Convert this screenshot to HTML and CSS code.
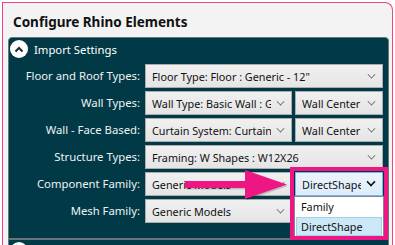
FILE: index.html
```html
<!DOCTYPE html>
<html lang="en">
<head>
    <meta charset="UTF-8">
    <title>Configure Rhino Elements</title>
    <link rel="stylesheet" href="styles.css">
</head>
<body>
<div class="window">
    <h1 class="title">Configure Rhino Elements</h1>

    <section class="expander">
        <div class="expander-head">
            <span class="toggle">
                <svg width="10" height="7" viewBox="0 0 10 7"><path d="M1.5 5.5 L5 2 L8.5 5.5" fill="none" stroke="#1b2b30" stroke-width="2"/></svg>
            </span>
            Import Settings
        </div>
        <div class="fields">
            <label>Floor and Roof Types:</label>
            <div class="combos">
                <div class="combo"><span class="combo-text">Floor Type: Floor : Generic - 12"</span><i class="chev"></i></div>
            </div>

            <label>Wall Types:</label>
            <div class="combos">
                <div class="combo wide"><span class="combo-text">Wall Type: Basic Wall : Generic - 8"</span><i class="chev"></i></div>
                <div class="combo narrow"><span class="combo-text">Wall Center</span><i class="chev"></i></div>
            </div>

            <label>Wall - Face Based:</label>
            <div class="combos">
                <div class="combo wide"><span class="combo-text">Curtain System: Curtain Wall</span><i class="chev"></i></div>
                <div class="combo narrow"><span class="combo-text">Wall Center</span><i class="chev"></i></div>
            </div>

            <label>Structure Types:</label>
            <div class="combos">
                <div class="combo"><span class="combo-text">Framing: W Shapes : W12X26</span><i class="chev"></i></div>
            </div>

            <label>Component Family:</label>
            <div class="combos">
                <div class="combo wide"><span class="combo-text">Generic Models</span><i class="chev"></i></div>
                <div class="combo narrow open"><span class="combo-text">DirectShape</span><i class="chev dark"></i></div>
            </div>

            <label>Mesh Family:</label>
            <div class="combos">
                <div class="combo wide"><span class="combo-text">Generic Models</span><i class="chev"></i></div>
            </div>
        </div>
    </section>

    <section class="expander collapsed">
        <div class="expander-head">
            <span class="toggle">
                <svg width="10" height="7" viewBox="0 0 10 7"><path d="M1.5 1.5 L5 5 L8.5 1.5" fill="none" stroke="#1b2b30" stroke-width="2"/></svg>
            </span>
            Parameter Definitions
        </div>
    </section>
</div>

<!-- popup list of the open combo -->
<div class="dropdown">
    <div class="dropdown-item">Family</div>
    <div class="dropdown-item selected">DirectShape</div>
</div>

<!-- annotation drawn over the screenshot -->
<svg class="callout-arrow" width="108" height="36" viewBox="0 0 108 36">
    <g transform="translate(1 1.5)" fill="rgba(0,0,0,0.18)">
        <rect x="2" y="14" width="62" height="7"/>
        <polygon points="62,3 104,17.5 62,32"/>
    </g>
    <g fill="#ee1683">
        <rect x="2" y="14" width="62" height="7"/>
        <polygon points="62,3 104,17.5 62,32"/>
    </g>
</svg>
<div class="callout-box"></div>
</body>
</html>
```

FILE: styles.css
```css
body {
    margin: 0;
    background: #ffffff;
    font-family: "Noto Sans", "Open Sans", sans-serif;
    overflow: hidden;
}

.window {
    margin: 2px 2px 0 2px;
    height: 243px;
    box-sizing: border-box;
    border: 1px solid #f0428f;
    border-bottom: none;
    border-radius: 0 8px 0 0;
    background: #f3f3f3;
    overflow: hidden;
}

.title {
    margin: 0;
    padding: 9px 0 5px 10px;
    font-size: 13.5px;
    line-height: 20px;
    font-weight: bold;
    color: #111;
}

.expander {
    margin: 0 3px 0 5px;
    background: #013a46;
    border: 1px solid #66777c;
    border-radius: 4px 4px 0 0;
    padding-bottom: 15px;
}

.expander.collapsed {
    padding-bottom: 0;
    border-radius: 0;
}

.expander-head {
    display: flex;
    align-items: center;
    gap: 6px;
    height: 22px;
    padding-left: 1px;
    font-size: 11.3px;
    color: #ffffff;
}

.toggle {
    width: 18px;
    height: 18px;
    border-radius: 50%;
    background: #ffffff;
    display: flex;
    align-items: center;
    justify-content: center;
}

.fields {
    display: grid;
    grid-template-columns: 131px 238px;
    column-gap: 5px;
    row-gap: 3px;
    padding-top: 4px;
}

.fields label {
    text-align: right;
    font-size: 11.3px;
    line-height: 24px;
    color: #eef2f3;
    white-space: nowrap;
}

.combos {
    display: flex;
    gap: 3px;
}

.combo {
    flex: 1;
    height: 24px;
    box-sizing: border-box;
    display: flex;
    align-items: center;
    padding: 0 7px 0 6px;
    background: linear-gradient(#f0f0f0, #e5e5e5);
    border: 1px solid #acacac;
    font-size: 10.8px;
    color: #111;
    overflow: hidden;
}

.combo.wide {
    flex: none;
    width: 147px;
}

.combo.narrow {
    flex: none;
    width: 88px;
}

.combo.open {
    background: linear-gradient(#ecf4fc, #dcecfc);
    border-color: #7eb4ea;
}

.combo-text {
    flex: 1;
    white-space: nowrap;
    overflow: hidden;
}

.chev {
    flex: none;
    width: 6px;
    height: 6px;
    margin-left: 6px;
    margin-top: -4px;
    border-right: 1.2px solid #606060;
    border-bottom: 1.2px solid #606060;
    transform: rotate(45deg) scale(0.8);
}

.chev.dark {
    border-color: #111;
    border-width: 2px;
}

.dropdown {
    position: absolute;
    left: 294px;
    top: 196px;
    width: 90px;
    height: 41px;
    box-sizing: border-box;
    background: #ffffff;
    border: 1px solid #828790;
    padding: 1px;
    font-size: 10.8px;
    color: #111;
}

.dropdown-item {
    height: 19px;
    line-height: 18px;
    padding-left: 5px;
    box-sizing: border-box;
}

.dropdown-item.selected {
    background: #cce8f6;
    border: 1px solid #9ed3ee;
    padding-left: 4px;
}

.callout-arrow {
    position: absolute;
    left: 183px;
    top: 167px;
}

.callout-box {
    position: absolute;
    left: 290px;
    top: 167px;
    width: 98px;
    height: 73px;
    box-sizing: border-box;
    border: 4px solid #ee1683;
}
```
